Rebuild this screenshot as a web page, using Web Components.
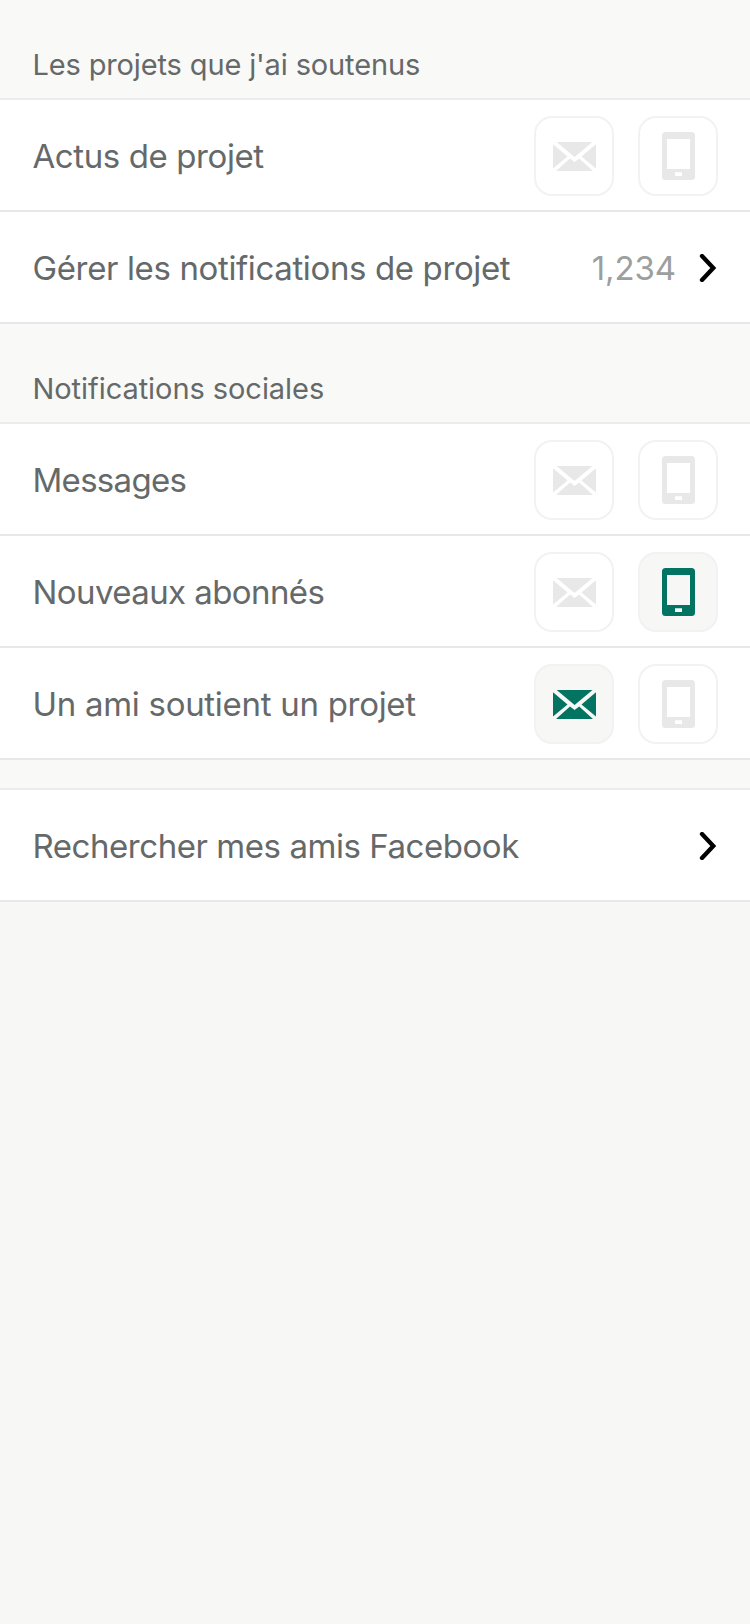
<!DOCTYPE html>
<html lang="fr">
<head>
<meta charset="utf-8">
<title>Notifications</title>
<style>
html, body { margin: 0; background: #f7f7f6; }
body { min-height: 1624px; font-family: Inter, "Liberation Sans", sans-serif; color: #656969; }
</style>
</head>
<body>
<settings-page>
  <settings-section heading="Les projets que j'ai soutenus" style="--track:-.14px">
    <settings-row label="Actus de projet" style="--track:-.4px"><channel-toggle kind="mail"></channel-toggle><channel-toggle kind="phone"></channel-toggle></settings-row>
    <settings-row label="Gérer les notifications de projet" style="--track:-.37px"><row-value>1,234</row-value><chevron-icon></chevron-icon></settings-row>
  </settings-section>
  <settings-section heading="Notifications sociales" style="--track:-.06px">
    <settings-row label="Messages" style="--track:-.7px"><channel-toggle kind="mail"></channel-toggle><channel-toggle kind="phone"></channel-toggle></settings-row>
    <settings-row label="Nouveaux abonnés" style="--track:-.58px"><channel-toggle kind="mail"></channel-toggle><channel-toggle kind="phone" on></channel-toggle></settings-row>
    <settings-row label="Un ami soutient un projet" style="--track:-.29px"><channel-toggle kind="mail" on></channel-toggle><channel-toggle kind="phone"></channel-toggle></settings-row>
  </settings-section>
  <settings-section>
    <settings-row label="Rechercher mes amis Facebook" style="--track:-.45px"><chevron-icon></chevron-icon></settings-row>
  </settings-section>
</settings-page>
<script>
class Base extends HTMLElement {
  constructor() {
    super();
    this.attachShadow({ mode: 'open' });
  }
  connectedCallback() {
    this.shadowRoot.innerHTML = this.render();
  }
}

customElements.define('settings-page', class extends Base {
  render() {
    return `<style>:host { display: flex; flex-direction: column; }</style><slot></slot>`;
  }
});

customElements.define('settings-section', class extends Base {
  render() {
    const heading = this.getAttribute('heading');
    return `<style>
      :host { display: block; }
      header { box-sizing: border-box; height: 100px; padding: 46px 0 0 32.5px; background: #f9f9f7;
        border-bottom: 2px solid #ececec; font-size: 29px; line-height: 38px; letter-spacing: var(--track); white-space: nowrap; }
      header.gap { height: 30px; padding: 0; background: #f9f9f8; }
    </style><header class="${heading ? '' : 'gap'}">${heading || ''}</header><slot></slot>`;
  }
});

customElements.define('settings-row', class extends Base {
  render() {
    return `<style>
      :host { display: flex; align-items: center; box-sizing: border-box; height: 112px;
        padding: 2px 32px 0 32.5px; background: #fff; border-bottom: 2px solid #e8e8e8; }
      .label { flex: 1; font-size: 33px; line-height: 42px; letter-spacing: var(--track); white-space: nowrap; }
      .actions { display: flex; align-items: center; gap: 24px; }
    </style><span class="label">${this.getAttribute('label')}</span><div class="actions"><slot></slot></div>`;
  }
});

customElements.define('row-value', class extends Base {
  render() {
    return `<style>:host { display: block; font-size: 33px; line-height: 42px; letter-spacing: -.1px; margin-right: -1px; color: #9b9f9e; }</style><slot></slot>`;
  }
});

customElements.define('chevron-icon', class extends Base {
  render() {
    return `<style>:host, svg { display: block; } :host { margin-top: -1px; }</style>
    <svg width="19" height="28" viewBox="0 0 19 28"><path d="M3 2 14.300 14 3 26" fill="none" stroke="#000" stroke-width="4.300" stroke-linecap="round"/></svg>`;
  }
});

const glyphs = {
  mail: `<svg width="43" height="29" viewBox="0 0 43 29" fill="currentColor"><path d="M3.7 0h35.8L21.6 15zM0 2.2 14.5 14.5 0 26.6zM43 2.2 28.5 14.5 43 26.6zM3 29 17 16.6l4.6 3.5 4.6-3.5L40 29z"/></svg>`,
  phone: `<svg width="33" height="48" viewBox="0 0 33 48" fill="currentColor"><path fill-rule="evenodd" d="M3.500 0h26a3.500 3.500 0 0 1 3.500 3.500v41a3.500 3.500 0 0 1-3.500 3.500h-26a3.500 3.500 0 0 1-3.500-3.500v-41a3.500 3.500 0 0 1 3.500-3.500zM5 7v30h23V7zM13 40.300v3.700h7v-3.700z"/></svg>`
};

customElements.define('channel-toggle', class extends Base {
  render() {
    return `<style>
      :host { display: grid; place-items: center; box-sizing: border-box; width: 80px; height: 80px;
        border: 2px solid #f2f2f2; border-radius: 18px; color: #e8e8e8; }
      :host([on]) { background: #f7f7f6; color: #037362; }
      svg { display: block; }
    </style>${glyphs[this.getAttribute('kind')]}`;
  }
});
</script>
</body>
</html>
